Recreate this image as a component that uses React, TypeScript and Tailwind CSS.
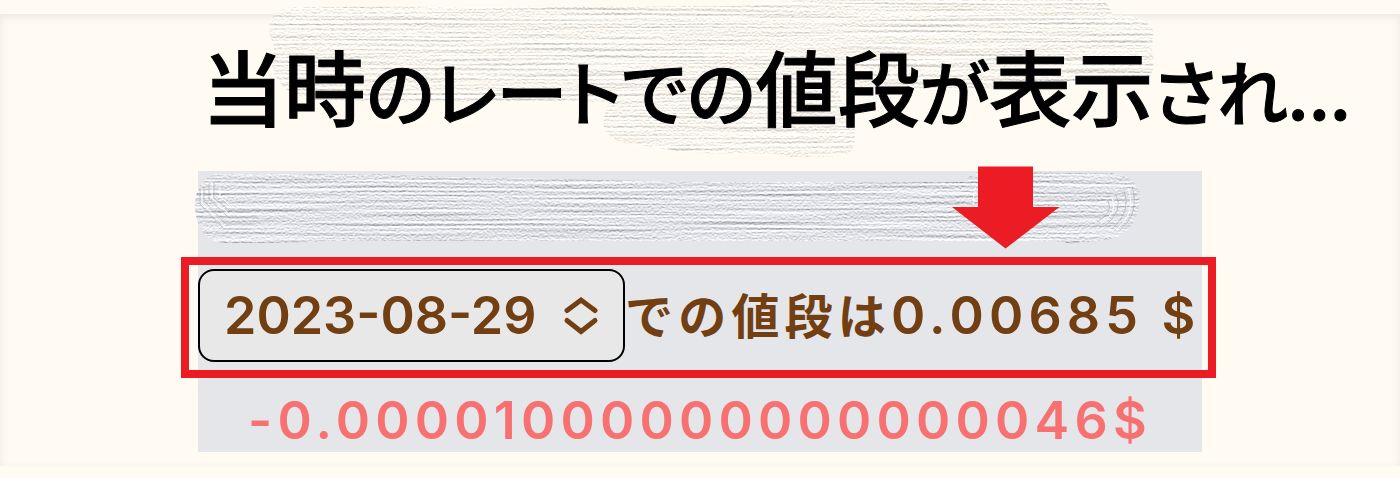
import { useState } from 'react';

const dates = ['2023-08-27', '2023-08-28', '2023-08-29', '2023-08-30'];

const titleParts = [
  { text: '当時', kana: false },
  { text: 'のレートでの', kana: true },
  { text: '値段', kana: false },
  { text: 'が', kana: true },
  { text: '表示', kana: false },
  { text: 'され...', kana: true },
];

// streaks and fine grain are mixed into one height map, then lit from above
const PaintFilter = ({ id, color, depth }: { id: string; color: string; depth: number }) => (
  <filter id={id} x="-2%" y="-5%" width="104%" height="110%" colorInterpolationFilters="sRGB">
    <feTurbulence type="fractalNoise" baseFrequency="0.006 0.4" numOctaves="2" seed="4" result="streaks" />
    <feTurbulence type="fractalNoise" baseFrequency="0.6 0.8" numOctaves="2" seed="11" result="grain" />
    <feComposite in="streaks" in2="grain" operator="arithmetic" k2="0.5" k3="0.5" result="height" />
    <feDiffuseLighting in="height" surfaceScale={depth} diffuseConstant="1.13" lightingColor={color} result="lit">
      <feDistantLight azimuth="270" elevation="60" />
    </feDiffuseLighting>
    <feComposite in="lit" in2="SourceAlpha" operator="in" />
  </filter>
);

const TitleBrush = () => (
  <svg
    className="absolute -top-[14px] left-[70px] pointer-events-none"
    width="900"
    height="160"
    viewBox="268 0 900 160"
    fill="none"
    aria-hidden="true"
  >
    <defs>
      <PaintFilter id="paint-warm" color="#fffaf2" depth={1.1} />
    </defs>
    <g filter="url(#paint-warm)" fill="#fffaf2">
      <path d="M292 7 Q268 10 269 31 Q271 40 274 44 L272 66 Q280 96 318 101 L610 102 Q603 112 604 128 Q610 143 640 145 L690 153 L775 154 L790 157 L846 156 Q858 146 854 128 L846 115 L838 91 L985 90 L1120 80 L1150 78 Q1156 66 1152 50 L1153 30 Q1146 14 1112 15 Q1110 2 1098 0 L800 0 L740 6 Z" />
    </g>
  </svg>
);

const PanelBrush = () => (
  <svg
    className="absolute top-0 -left-1 pointer-events-none"
    width="950"
    height="78"
    viewBox="194 171 950 78"
    fill="none"
    aria-hidden="true"
  >
    <defs>
      <PaintFilter id="paint-cool" color="#e8e9ee" depth={1.5} />
    </defs>
    <g filter="url(#paint-cool)" fill="#e5e7eb">
      <path d="M215 174 Q194 182 195 210 Q199 240 222 243 L280 243 L340 241 L1040 241 Q1060 240 1070 244 L1080 242 Q1110 241 1120 236 Q1140 224 1140 193 Q1134 175 1112 173 L978 172 Q968 175 966 182 L700 182 L420 176 L380 174 Z" />
    </g>
    <g stroke="#aeb0b5" opacity="0.7">
      <path d="M200 189 V204 L224 229 H250 M204 187 V201 L226 224 H255 M209 184 V199 L228 217 H258 M214 182 V198 L229 210 H262" />
      <path d="M1132 186 Q1140 214 1120 230 M1124 190 Q1132 212 1112 229 M1116 195 Q1124 210 1105 226 M1108 201 Q1114 212 1097 222" />
    </g>
    <g stroke="#ffffff" opacity="0.9">
      <path d="M202 188 V203 L225 227 H250 M212 183 V198 L229 214 H262 M220 186 V196 L230 206 M225 192 H330" />
      <path d="M1128 188 Q1137 213 1116 230 M1112 198 Q1119 211 1101 224 M978 184 Q972 190 974 204" />
    </g>
  </svg>
);

const DownArrow = () => (
  <svg
    className="absolute -top-[5px] left-[754px] pointer-events-none"
    width="108"
    height="83"
    viewBox="0 0 108 83"
    fill="#ec1c24"
    aria-hidden="true"
  >
    <path d="M26 0.5 H81 V41 H107.5 L53.5 82.5 L0 41 H26 Z" />
  </svg>
);

const App = () => {
  const [date, setDate] = useState('2023-08-29');

  return (
    <div className="min-h-screen overflow-hidden bg-[#fffaf2] py-3.5 font-['Inter','Noto_Sans_CJK_JP',sans-serif]">
      <main className="pb-3.5 shadow-[inset_0_3px_8px_rgba(0,0,0,0.08)]">
        <div className="relative mx-auto max-w-[1004px]">
          <TitleBrush />
          <h1 className="relative whitespace-nowrap pl-1 pt-2.5 pb-6.5 font-['Noto_Sans_CJK_JP',sans-serif] text-[82px] leading-[121px] font-medium text-black [font-feature-settings:'palt'] [-webkit-text-stroke:1px_black]">
            {titleParts.map((part) => (
              <span key={part.text} className={part.kana ? 'text-[71px] leading-none' : undefined}>
                {part.text}
              </span>
            ))}
          </h1>

          <section className="relative bg-[#e5e6ea] font-semibold">
            <div className="h-[86px]">
              <PanelBrush />
              <DownArrow />
            </div>

            <div className="relative flex h-[121px] items-center pb-1 text-[52px] text-[#713f12]">
              <div className="relative w-[427px] shrink-0">
                <select
                  aria-label="日付"
                  value={date}
                  onChange={(e) => setDate(e.target.value)}
                  className="block h-[93px] w-full appearance-none rounded-2xl border-2 border-black bg-[#e8e8e8] pl-6"
                >
                  {dates.map((d) => (
                    <option key={d}>{d}</option>
                  ))}
                </select>
                <svg
                  className="absolute top-[26px] right-[26px] pointer-events-none"
                  width="36"
                  height="42"
                  viewBox="0 0 36 42"
                  fill="none"
                  stroke="currentColor"
                  strokeWidth="5"
                  strokeLinecap="round"
                  aria-hidden="true"
                >
                  <path d="M4 15.500 L18 5 L32 15.500 M4 25.500 L18 36.500 L32 25.500" />
                </svg>
              </div>
              <p className="whitespace-nowrap tracking-widest">
                <span className="text-[48px]">での値段は</span>0.00685 $
              </p>
              <div className="absolute inset-y-0 -left-[17px] -right-[14px] border-8 border-[#ec1c24] pointer-events-none" />
            </div>

            <p className="h-[74px] whitespace-nowrap text-center text-[52px] leading-[86px] tracking-widest text-[#f87171]">
              -0.00001000000000000046$
            </p>
          </section>
        </div>
      </main>
    </div>
  );
};

export default App;
